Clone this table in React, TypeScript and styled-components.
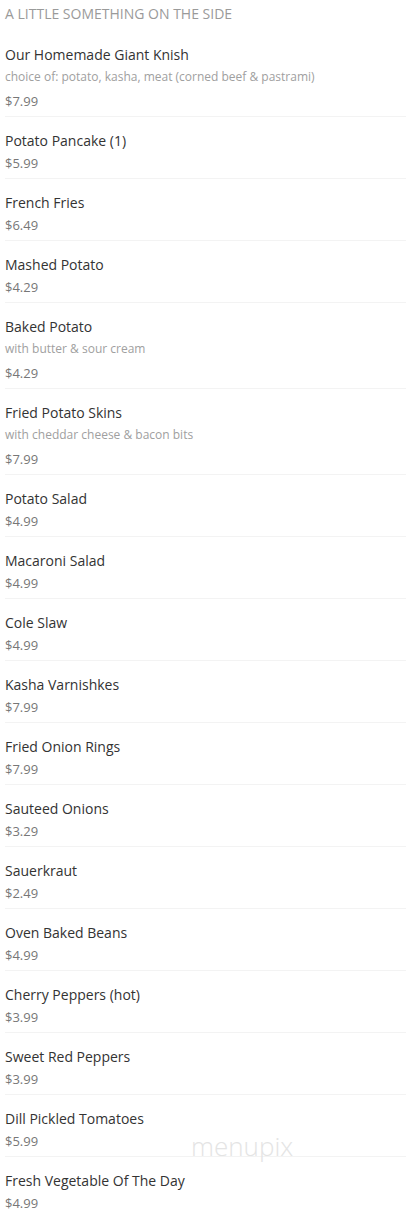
import React from 'react';
import styled, {createGlobalStyle} from "styled-components";

type MenuItemType = {
    name: string
    description?: string
    price: string
}

const items: MenuItemType[] = [
    {name: 'Our Homemade Giant Knish', description: 'choice of: potato, kasha, meat (corned beef & pastrami)', price: '$7.99'},
    {name: 'Potato Pancake (1)', price: '$5.99'},
    {name: 'French Fries', price: '$6.49'},
    {name: 'Mashed Potato', price: '$4.29'},
    {name: 'Baked Potato', description: 'with butter & sour cream', price: '$4.29'},
    {name: 'Fried Potato Skins', description: 'with cheddar cheese & bacon bits', price: '$7.99'},
    {name: 'Potato Salad', price: '$4.99'},
    {name: 'Macaroni Salad', price: '$4.99'},
    {name: 'Cole Slaw', price: '$4.99'},
    {name: 'Kasha Varnishkes', price: '$7.99'},
    {name: 'Fried Onion Rings', price: '$7.99'},
    {name: 'Sauteed Onions', price: '$3.29'},
    {name: 'Sauerkraut', price: '$2.49'},
    {name: 'Oven Baked Beans', price: '$4.99'},
    {name: 'Cherry Peppers (hot)', price: '$3.99'},
    {name: 'Sweet Red Peppers', price: '$3.99'},
    {name: 'Dill Pickled Tomatoes', price: '$5.99'},
    {name: 'Fresh Vegetable Of The Day', price: '$4.99'},
]

const GlobalStyle = createGlobalStyle`
  body {
    margin: 0;
    background: #fff;
    font-family: "Open Sans", "Liberation Sans", sans-serif;
  }
`

export default function App() {
    return (
        <Page>
            <GlobalStyle/>
            <Section>
                <Title>A little something on the side</Title>
                <List>
                    {items.map((item, i) => (
                        <Item key={i}>
                            <Name>{item.name}</Name>
                            {item.description && <Description>{item.description}</Description>}
                            <Price>{item.price}</Price>
                        </Item>
                    ))}
                </List>
            </Section>
            <Watermark>menupix</Watermark>
        </Page>
    );
}

const Page = styled.div`
  position: relative;
  width: 406px;
  height: 1216px;
  overflow: hidden;
`

const Section = styled.section`
  padding-left: 5px;
`

const Title = styled.h2`
  margin: 0;
  padding-top: 4px;
  height: 27px;
  line-height: 20px;
  font-size: 14px;
  font-weight: 400;
  color: #9a9a9a;
  text-transform: uppercase;
`

const List = styled.div`
  display: flex;
  flex-direction: column;
`

const Item = styled.div`
  display: flex;
  flex-direction: column;
  padding: 13px 0 4px;
  border-bottom: 1px solid #f3f3f3;
`

const Name = styled.div`
  font-size: 14px;
  line-height: 22px;
  color: #333;
`

const Description = styled.div`
  font-size: 12px;
  line-height: 21px;
  color: #a0a0a0;
  margin-bottom: 3px;
`

const Price = styled.div`
  font-size: 13px;
  line-height: 22px;
  color: #777;
`

const Watermark = styled.div`
  position: absolute;
  left: 191px;
  top: 1128px;
  font-size: 26px;
  font-weight: 300;
  color: #e4e4e4;
  pointer-events: none;
`
